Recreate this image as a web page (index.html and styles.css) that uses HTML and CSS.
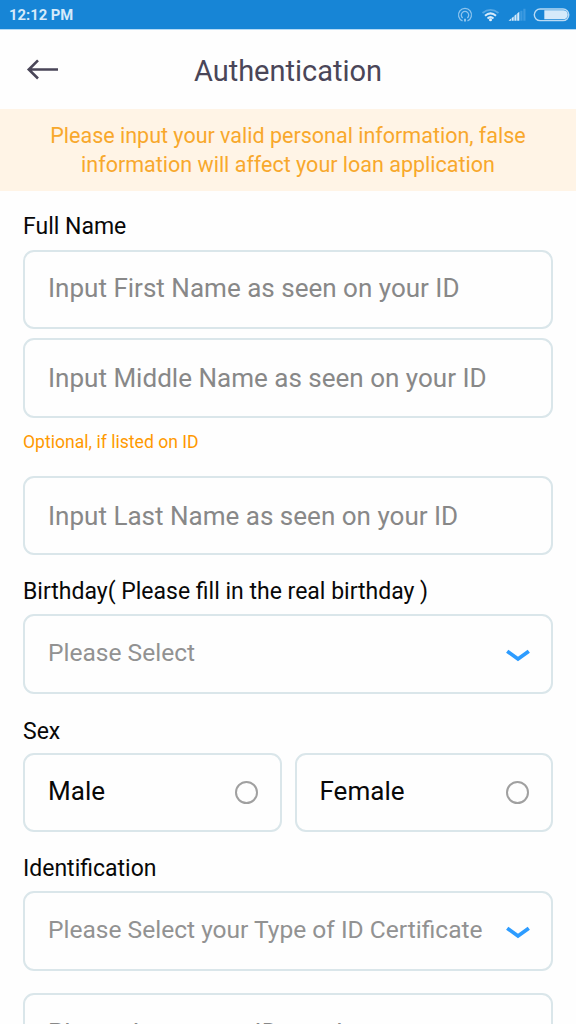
FILE: index.html
```html
<!DOCTYPE html>
<html lang="en">
<head>
<meta charset="utf-8">
<title>Authentication</title>
<link rel="stylesheet" href="styles.css">
</head>
<body>
<div class="status">
  <span class="time">12:12 PM</span>
  <svg class="status-icons" width="114" height="20" viewBox="0 0 114 20" fill="none">
    <g stroke="#8dc4ee" stroke-width="1.300">
      <path d="M6.500 15.900A6.500 6.500 0 1 1 11.500 15.900"/>
      <path d="M6.700 13A3.700 3.700 0 1 1 11.300 13"/>
      <path d="M9 13.800V16.500" stroke-width="2"/>
    </g>
    <path d="M26.500 8Q34.500 1.900 42.500 8" stroke="#57a8e4" stroke-width="1.800"/>
    <path d="M29 10.700Q34.500 6 40 10.700M31.500 13.400Q34.500 10.900 37.500 13.400" stroke="#d5eafa" stroke-width="2"/>
    <circle cx="34.500" cy="14.700" r="1.500" fill="#e3f2fd"/>
    <path d="M52.500 15.700l2.600-2.200v2.200zM55.700 15.700v-2.800l2-1.500v4.300zM58.400 15.700v-5l2.100-1.700v6.700zM61.200 15.700v-7.300l2.100-1.600v8.900z" fill="#d5eafa"/>
    <path d="M65.400 15.700v-10M68.400 15.700v-12" stroke="#3d9ae0" stroke-width="2.200"/>
    <rect x="78.300" y="4" width="34.500" height="11.600" rx="5.800" stroke="#b9daf4" stroke-width="1.400"/>
    <path d="M88.300 5.300h19a4.500 4.500 0 0 1 0 9h-19z" fill="#d5eafa"/>
  </svg>
</div>
<header class="header">
  <svg class="back" width="34" height="24" viewBox="0 0 34 24" fill="none" stroke="#4a4658" stroke-width="2.600"><path d="M32 12.500H3M12 3.300L2.800 12.500l9.200 9"/></svg>
  <h1 class="title">Authentication</h1>
</header>
<p class="notice">Please input your valid personal information, false<br>information will affect your loan application</p>
<main class="form">
  <div class="label label-name">Full Name</div>
  <div class="field"><span class="hint">Input First Name as seen on your ID</span></div>
  <div class="field field-middle tall"><span class="hint">Input Middle Name as seen on your ID</span></div>
  <div class="note">Optional, if listed on ID</div>
  <div class="field field-surname"><span class="hint">Input Last Name as seen on your ID</span></div>
  <div class="label label-birthday">Birthday( Please fill in the real birthday )</div>
  <div class="field field-select tall"><span class="choice">Please Select</span><svg class="chevron" width="24" height="14" viewBox="0 0 24 14"><path d="M1.200 2.200L12 10 22.800 2.200"/></svg></div>
  <div class="label label-sex">Sex</div>
  <div class="options">
    <div class="field"><span class="option">Male</span><span class="radio"></span></div>
    <div class="field"><span class="option">Female</span><span class="radio"></span></div>
  </div>
  <div class="label label-id">Identification</div>
  <div class="field field-select tall"><span class="choice">Please Select your Type of ID Certificate</span><svg class="chevron" width="24" height="14" viewBox="0 0 24 14"><path d="M1.200 2.200L12 10 22.800 2.200"/></svg></div>
  <div class="field tall field-last"><span class="hint">Please Input your ID number</span></div>
</main>
</body>
</html>
```
FILE: styles.css
```css
* { box-sizing: border-box; }
html, body { height: 1024px; overflow: hidden; }
body { margin: 0; background: #fefefe; color: #080808; font-family: Roboto, "Liberation Sans", sans-serif; }
.status { display: flex; justify-content: space-between; height: 29px; padding: 5px 6px 0 9px; background: #1785d6; }
.time { color: #d5eafa; font-size: 14.800px; font-weight: 700; line-height: 20px; }
.status-icons { display: block; }
.header { display: grid; grid-template-columns: 76px 1fr 76px; height: 80px; border-top: 1px solid #b5daf5; }
.back { margin: 27px 0 0 26px; }
.title { margin: 21px 0 0; color: #4a4658; font-size: 29px; font-weight: 400; line-height: 40px; text-align: center; white-space: nowrap; }
.notice { margin: 0; height: 82px; padding-top: 12px; background: #fff4e6; color: #f8a82c; font-size: 21.500px; line-height: 29px; text-align: center; white-space: nowrap; }
.form { display: flex; flex-direction: column; padding: 0 23px; }
.label { flex: none; height: 59px; padding-top: 22px; font-size: 23px; line-height: 30px; white-space: nowrap; }
.label-name { padding-top: 21px; }
.label-sex { padding-top: 23px; }
.field { display: flex; flex: none; justify-content: space-between; height: 79px; padding: 17px 22px 0 23px; border: 2px solid #dae6ea; border-radius: 11px; }
.tall { height: 80px; }
.field-middle { margin-top: 9px; padding-top: 19px; }
.field-surname { padding-top: 19px; }
.field-select { padding-top: 18px; }
.field-last { margin-top: 22px; padding-top: 19px; }
.hint, .choice, .option { font-size: 26.040px; line-height: 38px; white-space: nowrap; }
.hint { color: #888; }
.field-last .hint { font-size: 25.600px; letter-spacing: 0.200px; }
.choice { color: #929292; font-size: 24.550px; }
.note { flex: none; height: 58px; padding-top: 12px; color: #ff9900; font-size: 17.600px; line-height: 24px; }
.options { display: grid; grid-template-columns: 1fr 1fr; gap: 13px; }
.chevron { margin: 15px -1px 0 0; fill: none; stroke: #2d9cff; stroke-width: 3.800; }
.radio { width: 23px; height: 23px; margin-top: 9px; border: 2px solid #a0a0a0; border-radius: 50%; }
```
